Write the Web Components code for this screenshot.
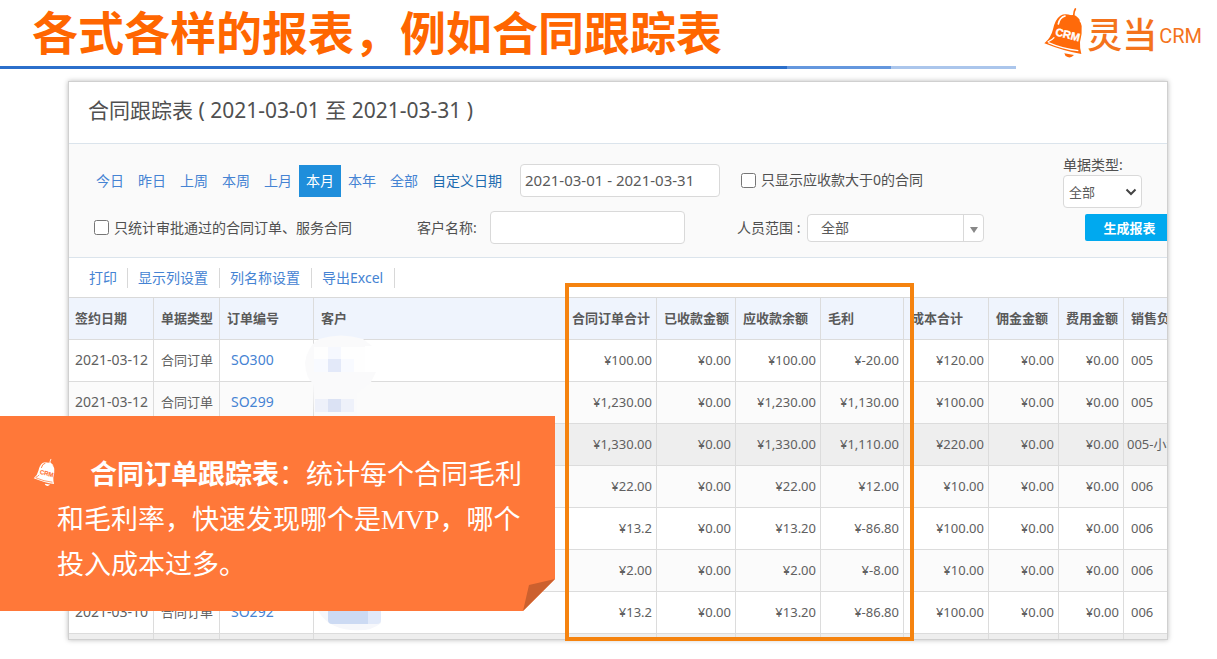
<!DOCTYPE html>
<html lang="zh-CN">
<head>
<meta charset="utf-8">
<title>合同跟踪表</title>
<style>
  html, body { margin: 0; background: #fff; }
  body {
    font-family: "Noto Sans", "Noto Sans CJK SC", sans-serif;
    font-size: 14px;
    line-height: 20px;
    color: #505050;
    overflow: hidden;
  }
</style>
</head>
<body>
<report-slide>
  <slide-header slot="header">各式各样的报表，例如合同跟踪表</slide-header>
  <report-panel>
    <span slot="title">合同跟踪表 ( 2021-03-01 至 2021-03-31 )</span>
    <report-filters></report-filters>
    <report-toolbar></report-toolbar>
    <report-table></report-table>
  </report-panel>
  <column-highlight slot="overlay"></column-highlight>
  <note-callout slot="overlay"><b>合同订单跟踪表</b>：统计每个合同毛利和毛利率，快速发现哪个是MVP，哪个投入成本过多。</note-callout>
</report-slide>

<script>
const define = (name, html, setup) => {
  const template = document.createElement('template');
  template.innerHTML = html;
  customElements.define(name, class extends HTMLElement {
    constructor() {
      super();
      this.attachShadow({ mode: 'open' }).append(template.content.cloneNode(true));
      if (setup) setup(this.shadowRoot, this);
    }
  });
};

define('bell-icon', `
  <style>
    :host { display: block; color: #ff6a0a; --cut: #fff; }
    svg { display: block; width: 100%; height: 100%; }
    text { font: bold 33px "Liberation Sans", sans-serif; fill: var(--cut); stroke: var(--cut); stroke-width: 1px; }
  </style>
  <svg viewBox="66 22 120 150" aria-hidden="true">
    <path d="M163 25 Q157 35 159 48" fill="none" stroke="currentColor" stroke-width="5" stroke-linecap="round"/>
    <path d="M145 46 Q160 38 172 52 L178 60 L140 52Z" fill="currentColor"/>
    <path d="M118 45 Q132 37 150 44 Q178 54 182 76 Q184 100 177 124 Q176 142 181 160 Q130 152 70 128 Q90 112 96 86 Q102 56 118 45Z" fill="currentColor"/>
    <path d="M112 70 Q116 50 132 46" fill="none" stroke="var(--cut)" stroke-width="5" stroke-linecap="round"/>
    <path d="M80 124 Q93 118 100 110 M82 126 Q125 145 172 150" fill="none" stroke="var(--cut)" stroke-width="4"/>
    <path d="M130 158 L159 163 Q150 173 140 169 Q131 166 130 158Z" fill="currentColor"/>
    <text x="101" y="104" transform="rotate(14 101 104)">CRM</text>
  </svg>`);

define('brand-logo', `
  <style>
    :host { display: flex; align-items: center; color: #f4731c; white-space: nowrap; }
    bell-icon { width: 40px; height: 50px; margin-right: 4px; }
    .cn { font: 500 35px/50px "Noto Sans CJK SC", sans-serif; }
    .en { font: 20px/46px "Roboto", sans-serif; margin-left: 2px; padding-top: 6px; }
  </style>
  <bell-icon></bell-icon><span class="cn">灵当</span><span class="en">CRM</span>`);

define('slide-header', `
  <style>
    :host { display: block; }
    .bar { display: flex; justify-content: space-between; align-items: flex-start; height: 66px; padding: 0 15px 0 32px; }
    h1 { margin: 0; font: bold 46px/60px "Noto Sans CJK SC", sans-serif; color: #ff6600; white-space: nowrap; }
    brand-logo { padding-top: 7px; height: 52px; }
    .rule { height: 3px; width: 83.5%; background: linear-gradient(90deg, #2b6fcb 0 77.5%, #6497de 77.5% 87.7%, #abc6ec 87.7%); }
  </style>
  <div class="bar"><h1><slot></slot></h1><brand-logo></brand-logo></div>
  <div class="rule"></div>`);

define('report-slide', `
  <style>
    :host { display: block; position: relative; }
    main { padding: 12px 49px 19px 68px; }
  </style>
  <slot name="header"></slot>
  <main><slot></slot></main>
  <slot name="overlay"></slot>`);

define('report-panel', `
  <style>
    :host { display: block; height: 557px; overflow: hidden; background: #fff; border: 1px solid #d0d0d0; box-shadow: 0 0 5px #bbb; box-sizing: content-box; }
    h2 { margin: 0; padding: 14px 19px 19px; font-size: 21px; line-height: 28px; font-weight: normal; border-bottom: 1px solid #dbe4ec; }
  </style>
  <h2><slot name="title"></slot></h2>
  <slot></slot>`);

define('report-filters', `
  <style>
    :host { display: flex; height: 113px; background: #fafafa; border-bottom: 1px solid #dbe4ec; }
    .main { flex: 1 0 974px; padding: 19px 0 0 20px; }
    .row { display: flex; align-items: center; }
    .row + .row { margin-top: 14px; padding-left: 5px; }
    nav { display: flex; width: 431px; padding-top: 2px; }
    a { padding: 0 7px; line-height: 32px; color: #4583d3; text-decoration: none; }
    a.on { background: #1f8edb; color: #fff; }
    a.custom { color: #1d6cb0; }
    input, select, button { font: inherit; color: #5a5a5a; box-sizing: border-box; margin: 0; }
    input[type=text] { height: 33px; border: 1px solid #d9d9d9; border-radius: 4px; background: #fff; padding: 0 4px; }
    input[type=checkbox] { width: 15px; height: 15px; margin-right: 5px; }
    label { display: flex; align-items: center; white-space: nowrap; }
    #period { width: 200px; font-size: 15px; margin-right: 21px; }
    .approved { width: 323px; }
    .client { width: 73px; }
    #client { width: 195px; margin-right: 52px; }
    .staff { width: 70px; }
    .combo { position: relative; width: 177px; }
    .combo select { appearance: none; display: block; width: 100%; height: 28px; border: 1px solid #d9d9d9; border-radius: 4px; background: #fff; padding: 0 13px; font-size: 14px; }
    .combo::before { content: ""; position: absolute; right: 20px; top: 1px; bottom: 1px; border-left: 1px solid #d9d9d9; }
    .combo::after { content: ""; position: absolute; right: 6px; top: 13px; border: 4px solid transparent; border-top: 6px solid #888; border-bottom: 0; }
    .side { flex: 1 0 auto; padding-top: 11px; }
    .side label { display: block; }
    .pick { position: relative; width: 79px; }
    .pick select { appearance: none; display: block; width: 100%; height: 33px; border: 1px solid #d9d9d9; border-radius: 4px; background: #fff; padding: 0 5px; font-size: 13px; }
    .pick svg { position: absolute; right: 5px; top: 13px; width: 12px; height: 8px; pointer-events: none; }
    button { display: block; width: 89px; height: 27px; margin: 6px 0 0 22px; border: 0; border-radius: 2px; background: #00a9ef; color: #fff; font-size: 13px; font-weight: bold; padding: 0; }
  </style>
  <div class="main">
    <div class="row">
      <nav>
        <a href="#">今日</a><a href="#">昨日</a><a href="#">上周</a><a href="#">本周</a><a href="#">上月</a><a href="#" class="on">本月</a><a href="#">本年</a><a href="#">全部</a><a href="#" class="custom">自定义日期</a>
      </nav>
      <input type="text" id="period" aria-label="自定义日期" value="2021-03-01 - 2021-03-31">
      <label><input type="checkbox">只显示应收款大于0的合同</label>
    </div>
    <div class="row">
      <label class="approved"><input type="checkbox">只统计审批通过的合同订单、服务合同</label>
      <label class="client" for="client">客户名称:</label>
      <input type="text" id="client">
      <label class="staff" for="staff">人员范围 :</label>
      <span class="combo"><select id="staff"><option>全部</option></select></span>
    </div>
  </div>
  <div class="side">
    <label for="kind">单据类型:</label>
    <div class="pick">
      <select id="kind"><option>全部</option></select>
      <svg viewBox="0 0 12 8" aria-hidden="true"><path d="M1.5 1.5 L6 6 L10.5 1.5" fill="none" stroke="#444" stroke-width="2"/></svg>
    </div>
    <button type="button">生成报表</button>
  </div>`);

define('report-toolbar', `
  <style>
    :host { display: flex; align-items: center; height: 39px; padding-left: 10px; }
    a { padding: 0 10px; border-right: 1px solid #d8d8d8; color: #4583d3; text-decoration: none; white-space: nowrap; line-height: 20px; }
    a + a { padding-right: 11px; }
  </style>
  <a href="#">打印</a><a href="#">显示列设置</a><a href="#">列名称设置</a><a href="#">导出Excel</a>`);

const columns = [
  ['签约日期', 85], ['单据类型', 66], ['订单编号', 94], ['客户', 253],
  ['合同订单合计', 90], ['已收款金额', 79], ['应收款余额', 85], ['毛利', 83],
  ['成本合计', 85], ['佣金金额', 70], ['费用金额', 65], ['销售负责人', 100]
];
const rows = [
  ['2021-03-12', '合同订单', 'SO300', '', '¥100.00', '¥0.00', '¥100.00', '¥-20.00', '¥120.00', '¥0.00', '¥0.00', '005'],
  ['2021-03-12', '合同订单', 'SO299', '', '¥1,230.00', '¥0.00', '¥1,230.00', '¥1,130.00', '¥100.00', '¥0.00', '¥0.00', '005'],
  ['', '', '', '', '¥1,330.00', '¥0.00', '¥1,330.00', '¥1,110.00', '¥220.00', '¥0.00', '¥0.00', '005-小计'],
  ['', '', '', '', '¥22.00', '¥0.00', '¥22.00', '¥12.00', '¥10.00', '¥0.00', '¥0.00', '006'],
  ['', '', '', '', '¥13.2', '¥0.00', '¥13.20', '¥-86.80', '¥100.00', '¥0.00', '¥0.00', '006'],
  ['', '', '', '', '¥2.00', '¥0.00', '¥2.00', '¥-8.00', '¥10.00', '¥0.00', '¥0.00', '006'],
  ['2021-03-10', '合同订单', 'SO292', '', '¥13.2', '¥0.00', '¥13.20', '¥-86.80', '¥100.00', '¥0.00', '¥0.00', '006'],
  ['', '', '', '', '', '', '', '', '', '', '', '']
];

define('report-table', `
  <style>
    :host { display: block; position: relative; }
    table { table-layout: fixed; width: 1155px; border-collapse: separate; border-spacing: 0; border-top: 1px solid #d9d9d9; font-size: 13px; color: #606060; }
    th, td { height: 39px; box-sizing: content-box; padding: 0 4px 2px 7px; border-right: 1px solid #dcdcdc; border-bottom: 1px solid #dcdcdc; white-space: nowrap; }
    th { background: #eff4fd; text-align: left; color: #5a5a5a; }
    td { text-align: right; }
    th:first-child, td:first-child { padding-left: 6px; padding-right: 0; }
    th:nth-child(5) { padding-left: 5px; padding-right: 0; }
    td:nth-child(-n+4), td:last-child { text-align: left; }
    td:first-child, td:nth-child(3) { font-size: 14px; }
    td:nth-child(3) { padding-left: 11px; }
    td a { color: #4583d3; text-decoration: none; }
    tbody tr:nth-child(even) { background: #fbfbfb; }
    tbody tr.sum { background: #eee; }
    tr.sum td:last-child { padding-left: 3px; }
    svg { position: absolute; left: 230px; top: 36px; width: 90px; height: 300px; pointer-events: none; }
  </style>
  <table><colgroup></colgroup><thead><tr></tr></thead><tbody></tbody></table>
  <svg viewBox="0 0 90 300" aria-hidden="true">
    <path d="M20 6 Q42 -1 64 6 L73 13 H66 V39 H77 L72 49 L58 60 V84 H15 L14 50 Q7 46 6 30 Q8 14 20 6Z" fill="#fafafb"/>
    <path d="M15 14h51v25H15z" fill="#fefefe"/>
    <path d="M15 26h14v13H15zM42 26h13v13H42z" fill="#f8faff"/>
    <path d="M29 14h13v12H29z" fill="#f6f8fe"/>
    <path d="M29 26h13v13H29z" fill="#e3e9f9"/>
    <path d="M16 66h13v13H16z M42 66h13v13H42z" fill="#eef1fa"/>
    <path d="M29 66h13v13H29z" fill="#dbe2f4"/>
    <path d="M18 276 H82 V290 Q72 299 52 297 Q28 295 18 276Z" fill="#f6f7fb"/>
    <path d="M29 276h40v15H33q-4 0-4-4z" fill="#ccdaf3"/>
    <path d="M69 276h13v11q0 4-4 4h-9z" fill="#e1e9f9"/>
  </svg>`, root => {
    const make = (tag, text, props) => Object.assign(document.createElement(tag), { textContent: text }, props);
    for (const [name, width] of columns) {
      const col = document.createElement('col');
      col.style.width = width + 'px';
      root.querySelector('colgroup').append(col);
      root.querySelector('thead tr').append(make('th', name, { scope: 'col' }));
    }
    rows.forEach((cells, r) => {
      const tr = document.createElement('tr');
      if (r === 2 || r === 7) tr.className = 'sum';
      cells.forEach((value, c) => {
        const td = make('td', c === 2 ? '' : value);
        if (c === 2 && value) td.append(make('a', value, { href: '#' }));
        tr.append(td);
      });
      root.querySelector('tbody').append(tr);
    });
  });

define('column-highlight', `
  <style>
    :host { display: block; position: absolute; left: 565px; top: 283px; width: 341px; height: 350px; border: 4px solid #f5830f; }
  </style>`);

define('note-callout', `
  <style>
    :host { display: block; position: absolute; left: 0; top: 416px; width: 555px; }
    .sheet { height: 195px; box-sizing: border-box; padding: 37px 28px 0 57px; background: #ff7839; color: #fff; clip-path: polygon(0 0, 100% 0, 100% 163px, 523px 100%, 0 100%); }
    p { margin: 0; font: 27px/45px "Liberation Serif", "Noto Sans CJK SC", sans-serif; text-indent: 33px; }
    .fold { position: absolute; right: 0; bottom: 0; width: 32px; height: 32px; background: #cc602e; clip-path: polygon(100% 0, 6px 6px, 0 100%); }
    bell-icon { position: absolute; left: 33px; top: 42px; width: 22px; height: 29px; color: #fff; --cut: #ff7839; }
  </style>
  <div class="sheet"><p><slot></slot></p></div>
  <div class="fold"></div>
  <bell-icon></bell-icon>`);
</script>
</body>
</html>
